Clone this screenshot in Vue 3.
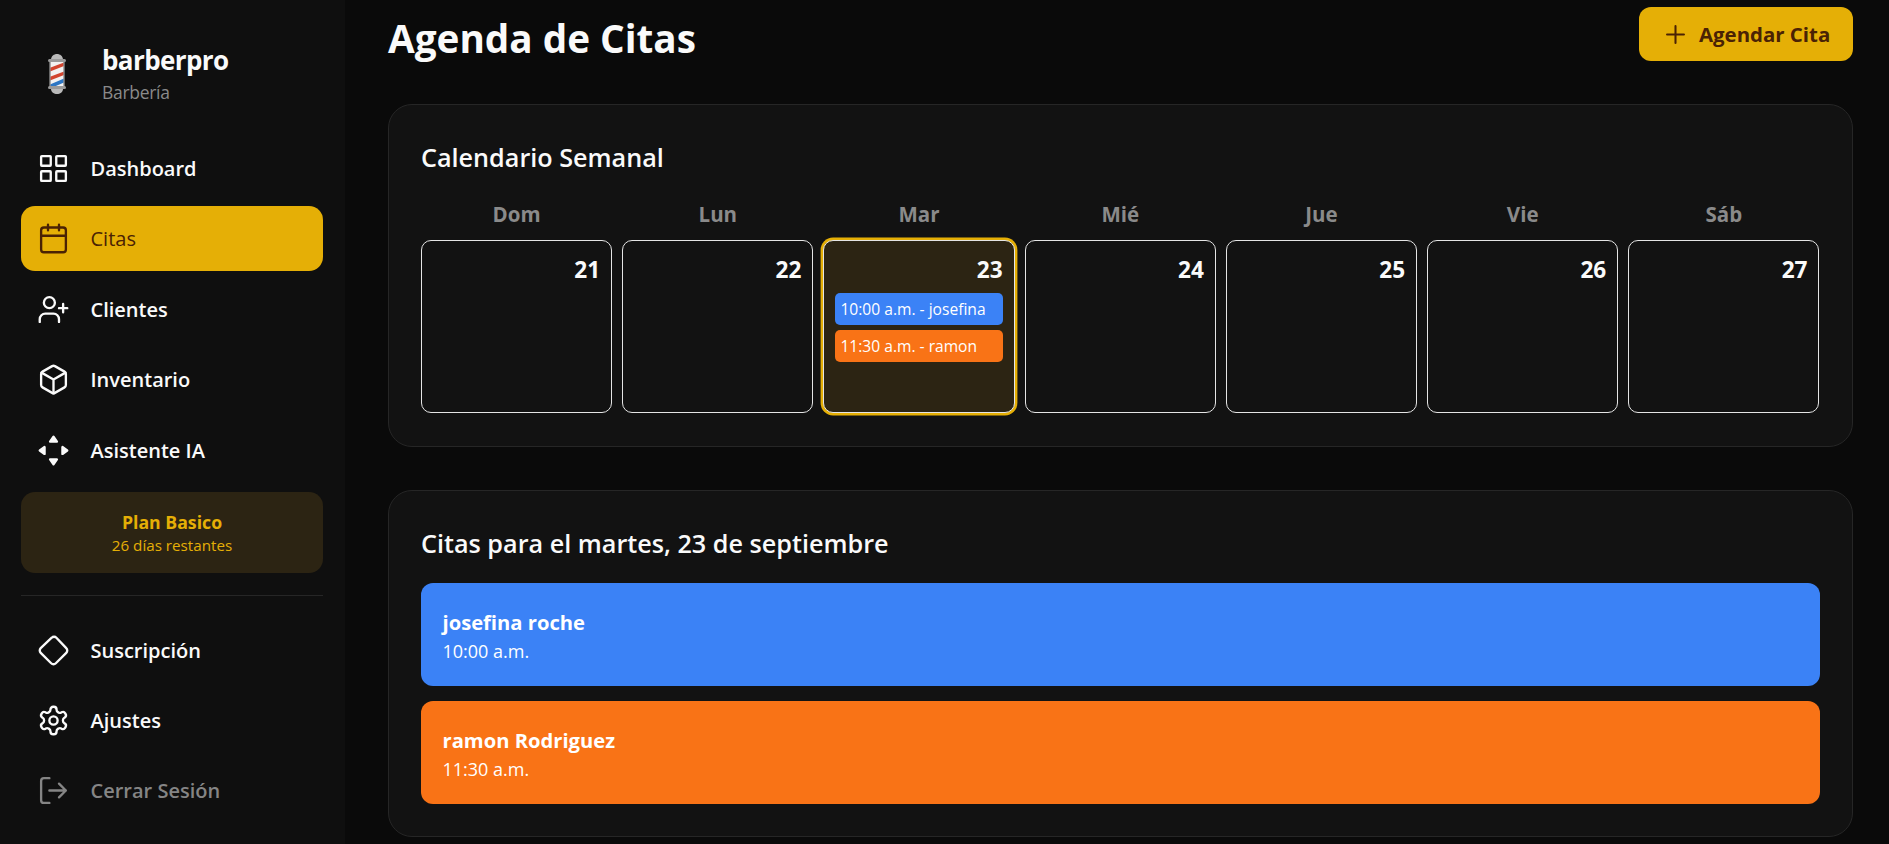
<script setup>
const navTop = [
  { label: 'Dashboard', icon: 'grid' },
  { label: 'Citas', icon: 'calendar', active: true },
  { label: 'Clientes', icon: 'user' },
  { label: 'Inventario', icon: 'box' },
  { label: 'Asistente IA', icon: 'move' },
]
const navBottom = [
  { label: 'Suscripción', icon: 'diamond' },
  { label: 'Ajustes', icon: 'gear' },
  { label: 'Cerrar Sesión', icon: 'logout', muted: true },
]
const days = [
  { name: 'Dom', num: 21 },
  { name: 'Lun', num: 22 },
  {
    name: 'Mar',
    num: 23,
    today: true,
    events: [
      { text: '10:00 a.m. - josefina', color: 'blue' },
      { text: '11:30 a.m. - ramon', color: 'orange' },
    ],
  },
  { name: 'Mié', num: 24 },
  { name: 'Jue', num: 25 },
  { name: 'Vie', num: 26 },
  { name: 'Sáb', num: 27 },
]
const appointments = [
  { name: 'josefina roche', time: '10:00 a.m.', color: 'blue' },
  { name: 'ramon Rodriguez', time: '11:30 a.m.', color: 'orange' },
]
</script>

<template>
  <div class="layout">
    <aside class="sidebar">
      <div class="brand">
        <svg class="pole" viewBox="0 0 20 42" width="20" height="42">
          <defs>
            <clipPath id="tube"><rect x="3" y="8" width="14" height="26" /></clipPath>
          </defs>
          <rect x="3" y="8" width="14" height="26" fill="#f2f2f2" />
          <g clip-path="url(#tube)">
            <path d="M2 15 18 9v3.5L2 19z" fill="#d2452f" />
            <path d="M2 24 18 18v3.5L2 28z" fill="#d2452f" />
            <path d="M2 32 18 25v4L2 36z" fill="#2c76c4" />
          </g>
          <path d="M3 8v26M17 8v26" stroke="#8d8d8d" stroke-width="1.4" />
          <path d="M4 7C4 3 7 1 10 1s6 2 6 6z" fill="#b9b9b9" />
          <rect x="1" y="6" width="18" height="3" rx="1.5" fill="#9a9a9a" />
          <rect x="1" y="33" width="18" height="3" rx="1.5" fill="#9a9a9a" />
          <path d="M4 36h12c0 3-3 5-6 5s-6-2-6-5z" fill="#b9b9b9" />
        </svg>
        <div>
          <div class="brand-name">barberpro</div>
          <div class="brand-type">Barbería</div>
        </div>
      </div>

      <nav class="nav">
        <a v-for="item in navTop" :key="item.label" class="nav-item" :class="{ active: item.active }">
          <svg class="nav-icon" viewBox="0 0 24 24">
            <template v-if="item.icon === 'grid'">
              <rect x="3" y="3" width="7" height="7" rx="0.5" /><rect x="14" y="3" width="7" height="7" rx="0.5" />
              <rect x="3" y="14" width="7" height="7" rx="0.5" /><rect x="14" y="14" width="7" height="7" rx="0.5" />
            </template>
            <template v-if="item.icon === 'calendar'">
              <rect x="3" y="4" width="18" height="18" rx="2" /><path d="M16 2v4M8 2v4M3 10h18" />
            </template>
            <template v-if="item.icon === 'user'">
              <path d="M16 21v-2a4 4 0 0 0-4-4H6a4 4 0 0 0-4 4v2" /><circle cx="9" cy="7" r="4" /><path d="M19 8v6M22 11h-6" />
            </template>
            <template v-if="item.icon === 'box'">
              <path d="M21 8a2 2 0 0 0-1-1.73l-7-4a2 2 0 0 0-2 0l-7 4A2 2 0 0 0 3 8v8a2 2 0 0 0 1 1.73l7 4a2 2 0 0 0 2 0l7-4A2 2 0 0 0 21 16Z" />
              <path d="m3.3 7 8.7 5 8.7-5M12 22V12" />
            </template>
            <template v-if="item.icon === 'move'">
              <path class="solid" d="M12 2 14.5 5.5H9.5zM12 22 14.5 18.5H9.5zM2 12 5.5 9.5v5zM22 12 18.5 9.5v5z" />
            </template>
          </svg>
          <span>{{ item.label }}</span>
        </a>
      </nav>

      <div class="plan">
        <div class="plan-name">Plan Basico</div>
        <div class="plan-days">26 días restantes</div>
      </div>

      <div class="divider"></div>

      <nav class="nav">
        <a v-for="item in navBottom" :key="item.label" class="nav-item" :class="{ muted: item.muted }">
          <svg class="nav-icon" viewBox="0 0 24 24">
            <template v-if="item.icon === 'diamond'">
              <path d="M2.7 10.3a2.41 2.41 0 0 0 0 3.41l7.59 7.59a2.41 2.41 0 0 0 3.41 0l7.59-7.59a2.41 2.41 0 0 0 0-3.41L14.1 2.7a2.41 2.41 0 0 0-3.41 0Z" />
            </template>
            <template v-if="item.icon === 'gear'">
              <path d="M12.22 2h-.44a2 2 0 0 0-2 2v.18a2 2 0 0 1-1 1.73l-.43.25a2 2 0 0 1-2 0l-.15-.08a2 2 0 0 0-2.73.73l-.22.38a2 2 0 0 0 .73 2.73l.15.1a2 2 0 0 1 1 1.72v.51a2 2 0 0 1-1 1.74l-.15.09a2 2 0 0 0-.73 2.73l.22.38a2 2 0 0 0 2.73.73l.15-.08a2 2 0 0 1 2 0l.43.25a2 2 0 0 1 1 1.73V20a2 2 0 0 0 2 2h.44a2 2 0 0 0 2-2v-.18a2 2 0 0 1 1-1.73l.43-.25a2 2 0 0 1 2 0l.15.08a2 2 0 0 0 2.73-.73l.22-.39a2 2 0 0 0-.73-2.73l-.15-.08a2 2 0 0 1-1-1.74v-.5a2 2 0 0 1 1-1.74l.15-.09a2 2 0 0 0 .73-2.73l-.22-.38a2 2 0 0 0-2.73-.73l-.15.08a2 2 0 0 1-2 0l-.43-.25a2 2 0 0 1-1-1.73V4a2 2 0 0 0-2-2z" />
              <circle cx="12" cy="12" r="3" />
            </template>
            <template v-if="item.icon === 'logout'">
              <path d="M9 21H5a2 2 0 0 1-2-2V5a2 2 0 0 1 2-2h4M16 17l5-5-5-5M21 12H9" />
            </template>
          </svg>
          <span>{{ item.label }}</span>
        </a>
      </nav>
    </aside>

    <main class="main">
      <header class="page-head">
        <h1>Agenda de Citas</h1>
        <button class="add-btn">
          <svg class="add-icon" viewBox="0 0 24 24"><path d="M5 12h14M12 5v14" /></svg>
          Agendar Cita
        </button>
      </header>

      <section class="card week">
        <h2>Calendario Semanal</h2>
        <div class="week-grid">
          <div v-for="day in days" :key="day.name" class="day-name">{{ day.name }}</div>
          <div v-for="day in days" :key="day.num" class="day" :class="{ today: day.today }">
            <div class="day-num">{{ day.num }}</div>
            <div v-for="ev in day.events" :key="ev.text" class="event" :class="ev.color">{{ ev.text }}</div>
          </div>
        </div>
      </section>

      <section class="card list">
        <h2>Citas para el martes, 23 de septiembre</h2>
        <div v-for="a in appointments" :key="a.name" class="appt" :class="a.color">
          <div class="appt-name">{{ a.name }}</div>
          <div class="appt-time">{{ a.time }}</div>
        </div>
      </section>
    </main>
  </div>
</template>

<style>
html, body {
  margin: 0;
  background: #0a0a0a;
  overflow: hidden;
}
</style>

<style scoped>
.layout {
  display: flex;
  height: 844px;
  overflow: hidden;
  font-family: "Open Sans", "Noto Sans", sans-serif;
  color: #fafafa;
}

.sidebar {
  width: 345px;
  flex: none;
  box-sizing: border-box;
  background: #0f0f0f;
  padding: 47px 22px 0 21px;
}

.brand {
  display: flex;
  align-items: center;
  gap: 35px;
  padding-left: 26px;
  margin-bottom: 35px;
  height: 54px;
}

.brand-name {
  font-size: 26px;
  font-weight: 700;
  line-height: 32px;
  letter-spacing: -0.6px;
}

.brand-type {
  font-size: 17.5px;
  line-height: 24px;
  margin-top: 4px;
  color: #8a8a8a;
  letter-spacing: -0.3px;
}

.nav {
  display: flex;
  flex-direction: column;
  gap: 5.4px;
}

.nav-item {
  display: flex;
  align-items: center;
  gap: 20.5px;
  height: 65px;
  padding-left: 16px;
  border-radius: 14px;
  font-size: 20px;
  font-weight: 600;
}

.nav-item.active {
  background: #e5af06;
  color: #4a2204;
  font-weight: 500;
}

.nav-item.muted {
  color: #858585;
}

.nav-icon {
  width: 33px;
  height: 33px;
  flex: none;
  fill: none;
  stroke: currentColor;
  stroke-width: 1.7;
  stroke-linecap: round;
  stroke-linejoin: round;
}

.solid {
  fill: currentColor;
}

.plan {
  margin-top: 9px;
  height: 81px;
  box-sizing: border-box;
  padding-top: 18px;
  background: #2c2413;
  border-radius: 14px;
  text-align: center;
  color: #e5af06;
}

.plan-name {
  font-size: 17.7px;
  font-weight: 700;
  line-height: 24px;
}

.plan-days {
  font-size: 15.2px;
  line-height: 22px;
}

.divider {
  height: 1px;
  background: #262626;
  margin: 22px 0;
}

.main {
  flex: 1;
  min-width: 0;
  background: #0a0a0a;
  padding: 7px 36px 0 43px;
}

.page-head {
  display: flex;
  justify-content: space-between;
  align-items: center;
  height: 54px;
  margin-bottom: 43px;
}

h1 {
  margin: 8px 0 0;
  font-size: 38.7px;
  font-weight: 700;
}

.add-btn {
  display: flex;
  align-items: center;
  gap: 9px;
  width: 214px;
  height: 54px;
  padding: 0 0 0 22px;
  border: none;
  border-radius: 12px;
  background: #e5af06;
  color: #4a2204;
  font: 700 20.4px "Open Sans", "Noto Sans", sans-serif;
}

.add-icon {
  width: 29px;
  height: 29px;
  fill: none;
  stroke: currentColor;
  stroke-width: 1.7;
  stroke-linecap: round;
}

.card {
  box-sizing: border-box;
  background: #121212;
  border: 1px solid #262626;
  border-radius: 24px;
  padding: 36px 32.5px 32px 32px;
}

.card h2 {
  margin: 0;
  font-size: 25.2px;
  font-weight: 600;
  line-height: 32px;
}

.week {
  height: 343px;
  margin-bottom: 43px;
}

.week-grid {
  display: grid;
  grid-template-columns: repeat(7, minmax(0, 1fr));
  grid-template-rows: 32px 173px;
  column-gap: 10px;
  row-gap: 10px;
  margin-top: 24.5px;
}

.day-name {
  text-align: center;
  font-size: 20.5px;
  font-weight: 700;
  line-height: 32px;
  color: #8a8a8a;
}

.day {
  box-sizing: border-box;
  border: 1px solid #e5e5e5;
  border-radius: 10px;
  padding: 14px 11px 11px;
  min-width: 0;
}

.day.today {
  background: #2c2413;
  box-shadow: 0 0 0 2.4px #e5af06;
}

.day-num {
  text-align: right;
  font-size: 22.6px;
  font-weight: 700;
  line-height: 30px;
  margin-bottom: 8px;
}

.event {
  height: 32px;
  margin-bottom: 5px;
  padding-left: 5px;
  border-radius: 5px;
  font-size: 15.6px;
  line-height: 32px;
  color: #fff;
  white-space: nowrap;
}

.blue {
  background: #3b82f6;
}

.orange {
  background: #f97316;
}

.list {
  height: 347px;
}

.appt {
  height: 102.5px;
  box-sizing: border-box;
  padding: 23.5px 21px 0 21.5px;
  border-radius: 12px;
  color: #fff;
  margin-top: 15.5px;
}

.list h2 + .appt {
  margin-top: 24px;
}

.appt-name {
  font-size: 20.2px;
  font-weight: 700;
  line-height: 30px;
}

.appt-time {
  font-size: 18px;
  line-height: 29px;
}
</style>
